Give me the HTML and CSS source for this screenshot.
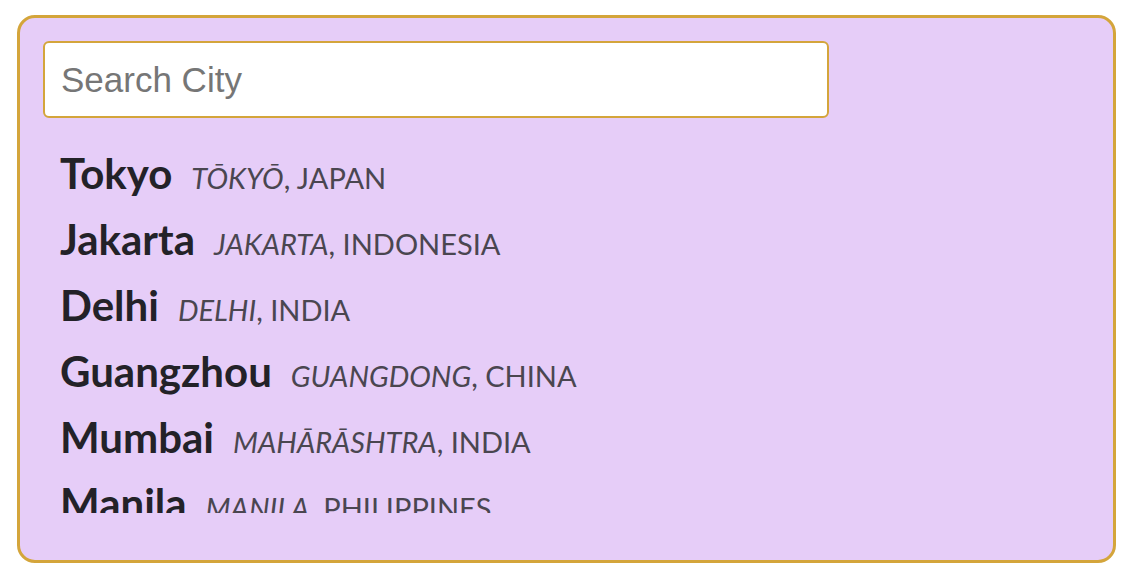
FILE: index.html
```html
<!DOCTYPE html>
<html lang="en">
<head>
<meta charset="utf-8">
<title>Search City</title>
<link rel="stylesheet" href="styles.css">
</head>
<body>
<div class="card">
  <input class="search" type="text" placeholder="Search City">
  <ul class="results">
    <li class="row"><span class="city">Tokyo</span><span class="place"><em>Tōkyō</em>, Japan</span></li>
    <li class="row"><span class="city">Jakarta</span><span class="place"><em>Jakarta</em>, Indonesia</span></li>
    <li class="row"><span class="city">Delhi</span><span class="place"><em>Delhi</em>, India</span></li>
    <li class="row"><span class="city">Guangzhou</span><span class="place"><em>Guangdong</em>, China</span></li>
    <li class="row"><span class="city">Mumbai</span><span class="place"><em>Mahārāshtra</em>, India</span></li>
    <li class="row"><span class="city">Manila</span><span class="place"><em>Manila</em>, Philippines</span></li>
  </ul>
</div>
</body>
</html>
```

FILE: styles.css
```css
html, body {
  margin: 0;
  background: #ffffff;
}
body {
  padding: 15px 16px 0 17px;
  font-family: Lato, "Open Sans", sans-serif;
}
.card {
  box-sizing: border-box;
  width: 1099px;
  height: 548px;
  border: 3px solid #d4a53b;
  border-radius: 18px;
  background: #e6cdf8;
  padding: 23px 23px 47px 23px;
  display: flex;
  flex-direction: column;
}
.search {
  box-sizing: border-box;
  width: 786px;
  height: 77px;
  border: 2px solid #d4a53b;
  border-radius: 6px;
  background: #ffffff;
  padding: 0 16px;
  font-family: "Liberation Sans", Arial, sans-serif;
  font-size: 35px;
  color: #222;
  outline: none;
}
.search::placeholder {
  color: #767676;
}
.results {
  list-style: none;
  margin: 22px 0 0 0;
  padding: 0 0 0 17px;
  height: 373px;
  overflow: hidden;
}
.row {
  height: 66px;
  line-height: 66px;
  white-space: nowrap;
}
.city {
  font-size: 42px;
  font-weight: 700;
  color: #232228;
}
.place {
  margin-left: 19px;
  font-size: 29px;
  color: #4a4650;
  text-transform: uppercase;
}
.place em {
  font-style: italic;
}
```
